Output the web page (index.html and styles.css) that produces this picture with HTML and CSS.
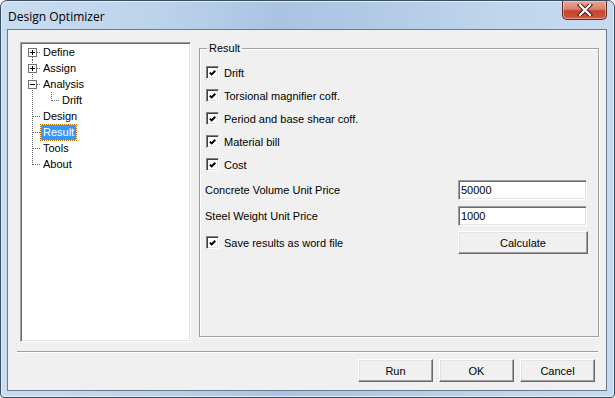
FILE: index.html
```html
<!DOCTYPE html>
<html lang="en">
<head>
  <meta charset="UTF-8">
  <title>Design Optimizer</title>
  <link rel="stylesheet" href="styles.css">
</head>
<body>
  <div class="window">
    <div class="titlebar">
      <span class="title">Design Optimizer</span>
      <button class="close" aria-label="Close">
        <svg width="16" height="12" viewBox="0 0 16 12">
          <path d="M3 1 L13 11 M13 1 L3 11" stroke="#4a1a12" stroke-width="4.2" stroke-linecap="square"/>
          <path d="M3 1 L13 11 M13 1 L3 11" stroke="#fff" stroke-width="2.2" stroke-linecap="square"/>
        </svg>
      </button>
    </div>

    <div class="client">
      <div class="content">
        <div class="tree">
          <div class="node">
            <svg class="gutter" width="19" height="16">
              <line x1="10.5" y1="13" x2="10.5" y2="16" class="dot"/>
              <line x1="15" y1="8.5" x2="19" y2="8.5" class="dot"/>
              <rect x="6.5" y="4.5" width="8" height="8" class="box"/>
              <path d="M8 8.5 H13 M10.5 6 V11" class="sign"/>
            </svg>
            <span class="label">Define</span>
          </div>
          <div class="node">
            <svg class="gutter" width="19" height="16">
              <line x1="10.5" y1="0" x2="10.5" y2="16" class="dot"/>
              <line x1="15" y1="8.5" x2="19" y2="8.5" class="dot"/>
              <rect x="6.5" y="4.5" width="8" height="8" class="box"/>
              <path d="M8 8.5 H13 M10.5 6 V11" class="sign"/>
            </svg>
            <span class="label">Assign</span>
          </div>
          <div class="node">
            <svg class="gutter" width="19" height="16">
              <line x1="10.5" y1="0" x2="10.5" y2="16" class="dot"/>
              <line x1="15" y1="8.5" x2="19" y2="8.5" class="dot"/>
              <rect x="6.5" y="4.5" width="8" height="8" class="box"/>
              <path d="M8 8.5 H13" class="sign"/>
            </svg>
            <span class="label">Analysis</span>
          </div>
          <div class="node">
            <svg class="gutter" width="38" height="16">
              <line x1="10.5" y1="0" x2="10.5" y2="16" class="dot"/>
              <line x1="29.5" y1="0" x2="29.5" y2="9" class="dot"/>
              <line x1="30" y1="8.5" x2="38" y2="8.5" class="dot"/>
            </svg>
            <span class="label">Drift</span>
          </div>
          <div class="node">
            <svg class="gutter" width="19" height="16">
              <line x1="10.5" y1="0" x2="10.5" y2="16" class="dot"/>
              <line x1="11" y1="8.5" x2="19" y2="8.5" class="dot"/>
            </svg>
            <span class="label">Design</span>
          </div>
          <div class="node">
            <svg class="gutter" width="19" height="16">
              <line x1="10.5" y1="0" x2="10.5" y2="16" class="dot"/>
              <line x1="11" y1="8.5" x2="19" y2="8.5" class="dot"/>
            </svg>
            <span class="label selected">Result</span>
          </div>
          <div class="node">
            <svg class="gutter" width="19" height="16">
              <line x1="10.5" y1="0" x2="10.5" y2="16" class="dot"/>
              <line x1="11" y1="8.5" x2="19" y2="8.5" class="dot"/>
            </svg>
            <span class="label">Tools</span>
          </div>
          <div class="node">
            <svg class="gutter" width="19" height="16">
              <line x1="10.5" y1="0" x2="10.5" y2="9" class="dot"/>
              <line x1="11" y1="8.5" x2="19" y2="8.5" class="dot"/>
            </svg>
            <span class="label">About</span>
          </div>
        </div>

        <fieldset class="group">
          <legend>Result</legend>
          <label class="check-row"><span class="checkbox"><svg width="11" height="11" viewBox="0 0 11 11"><polyline points="2,4.5 4,6.5 8,2.5" class="tick"/></svg></span>Drift</label>
          <label class="check-row"><span class="checkbox"><svg width="11" height="11" viewBox="0 0 11 11"><polyline points="2,4.5 4,6.5 8,2.5" class="tick"/></svg></span>Torsional magnifier coff.</label>
          <label class="check-row"><span class="checkbox"><svg width="11" height="11" viewBox="0 0 11 11"><polyline points="2,4.5 4,6.5 8,2.5" class="tick"/></svg></span>Period and base shear coff.</label>
          <label class="check-row"><span class="checkbox"><svg width="11" height="11" viewBox="0 0 11 11"><polyline points="2,4.5 4,6.5 8,2.5" class="tick"/></svg></span>Material bill</label>
          <label class="check-row"><span class="checkbox"><svg width="11" height="11" viewBox="0 0 11 11"><polyline points="2,4.5 4,6.5 8,2.5" class="tick"/></svg></span>Cost</label>

          <div class="field-row first">
            <span class="field-label">Concrete Volume Unit Price</span>
            <input class="textbox" type="text" value="50000">
          </div>
          <div class="field-row">
            <span class="field-label">Steel Weight Unit Price</span>
            <input class="textbox" type="text" value="1000">
          </div>
          <div class="field-row save-row">
            <label class="check-row"><span class="checkbox"><svg width="11" height="11" viewBox="0 0 11 11"><polyline points="2,4.5 4,6.5 8,2.5" class="tick"/></svg></span>Save results as word file</label>
            <button class="btn calc">Calculate</button>
          </div>
        </fieldset>
      </div>

      <div class="separator"></div>

      <div class="buttons">
        <button class="btn">Run</button>
        <button class="btn">OK</button>
        <button class="btn">Cancel</button>
      </div>
    </div>
  </div>
</body>
</html>
```

FILE: styles.css
```css
* {
  box-sizing: border-box;
}

body {
  margin: 0;
  font-family: "Liberation Sans", Arial, sans-serif;
  font-size: 11px;
  color: #000;
  background: #fff;
}

.window {
  width: 615px;
  height: 398px;
  padding: 0 7px 6px 6px;
  border: 1px solid #3c4d61;
  border-radius: 7px 7px 4px 4px;
  background: linear-gradient(90deg, #c9ddf1 0%, #bcd3ec 25%, #a9c4e2 45%, #b0c9e5 60%, #bed5ed 80%, #c6dbf0 100%);
  box-shadow: inset 1px 1px 0 #e3eef9, inset -1px -1px 0 #e3eef9;
}

.titlebar {
  display: flex;
  height: 28px;
}

.title {
  padding: 7px 0 0 1px;
  font-family: "Open Sans", sans-serif;
  font-size: 12px;
  color: #000;
}

.close {
  margin-left: auto;
  width: 45px;
  height: 19px;
  padding: 0;
  border: 1px solid #5d2a22;
  border-top: 0;
  border-radius: 0 0 5px 5px;
  background: linear-gradient(180deg, #e8a897 0%, #d9826d 45%, #c6432b 55%, #cf5a3f 100%);
  box-shadow: inset 0 0 0 1px rgba(255, 220, 210, 0.5);
  display: flex;
  align-items: center;
  justify-content: center;
}

.client {
  width: 600px;
  height: 362px;
  border: 1px solid #6b7b8e;
  background: #f0f0f0;
}

.content {
  display: flex;
  gap: 8px;
  margin: 12px 7px 0 12px;
}

.tree {
  width: 171px;
  height: 300px;
  background: #fff;
  border: 1px solid;
  border-color: #a0a0a0 #fff #fff #a0a0a0;
  box-shadow: inset 1px 1px 0 #696969, inset -1px -1px 0 #e3e3e3;
  padding: 1px 0 0 1px;
}

.node {
  display: flex;
  align-items: center;
  height: 16px;
}

.gutter {
  flex: none;
  display: block;
}

.dot {
  stroke: #666;
  stroke-width: 1;
  stroke-dasharray: 1 1;
}

.box {
  fill: #fff;
  stroke: #6f6f6f;
}

.sign {
  stroke: #000;
  stroke-width: 1;
  fill: none;
}

.label {
  padding: 1px 2px;
  line-height: 13px;
  white-space: nowrap;
}

.label.selected {
  background: #3399ff;
  color: #fff;
  outline: 1px dotted #c46a00;
}

.group {
  width: 400px;
  height: 295px;
  margin: 0;
  padding: 6px 10px 0 6px;
  border: 1px solid #a0a0a0;
  box-shadow: 1px 1px 0 #fff, inset 1px 1px 0 #fff;
  min-inline-size: 0;
}

.group legend {
  padding: 0 2px;
  margin-left: 1px;
  line-height: 13px;
}

.check-row {
  display: flex;
  align-items: center;
  height: 23px;
  white-space: nowrap;
}

.checkbox {
  width: 13px;
  height: 13px;
  margin-right: 5px;
  background: #fff;
  border: 1px solid;
  border-color: #808080 #fff #fff #808080;
  box-shadow: inset 1px 1px 0 #404040, inset -1px -1px 0 #e3e3e3;
  display: flex;
  align-items: center;
  justify-content: center;
}

.checkbox svg {
  margin: 1px 0 0 1px;
}

.tick {
  fill: none;
  stroke: #000;
  stroke-width: 2.2;
}

.field-row {
  display: flex;
  align-items: center;
  justify-content: space-between;
  margin-top: 6px;
}

.field-row.first {
  margin-top: 4px;
}

.field-label {
  margin-left: -1px;
}

.textbox {
  width: 129px;
  height: 20px;
  margin: 0 1px 0 0;
  padding: 0 2px;
  font-family: "Liberation Sans", Arial, sans-serif;
  font-size: 11px;
  color: #000;
  background: #fff;
  border: 1px solid;
  border-color: #a0a0a0 #fff #fff #a0a0a0;
  box-shadow: inset 1px 1px 0 #696969, inset -1px -1px 0 #e3e3e3;
  outline: none;
}

.save-row {
  margin-top: 5px;
}

.btn {
  width: 75px;
  height: 23px;
  padding: 0;
  font-family: "Liberation Sans", Arial, sans-serif;
  font-size: 11px;
  color: #000;
  background: #f0f0f0;
  border: 1px solid;
  border-color: #fff #696969 #696969 #fff;
  box-shadow: inset -1px -1px 0 #a0a0a0, inset 1px 1px 0 #e3e3e3;
}

.btn.calc {
  width: 130px;
}

.separator {
  height: 2px;
  margin: 9px 8px 0 9px;
  border-top: 1px solid #a0a0a0;
  border-bottom: 1px solid #fff;
}

.buttons {
  display: flex;
  justify-content: flex-end;
  gap: 6px;
  margin-top: 6px;
  padding-right: 11px;
}
```
